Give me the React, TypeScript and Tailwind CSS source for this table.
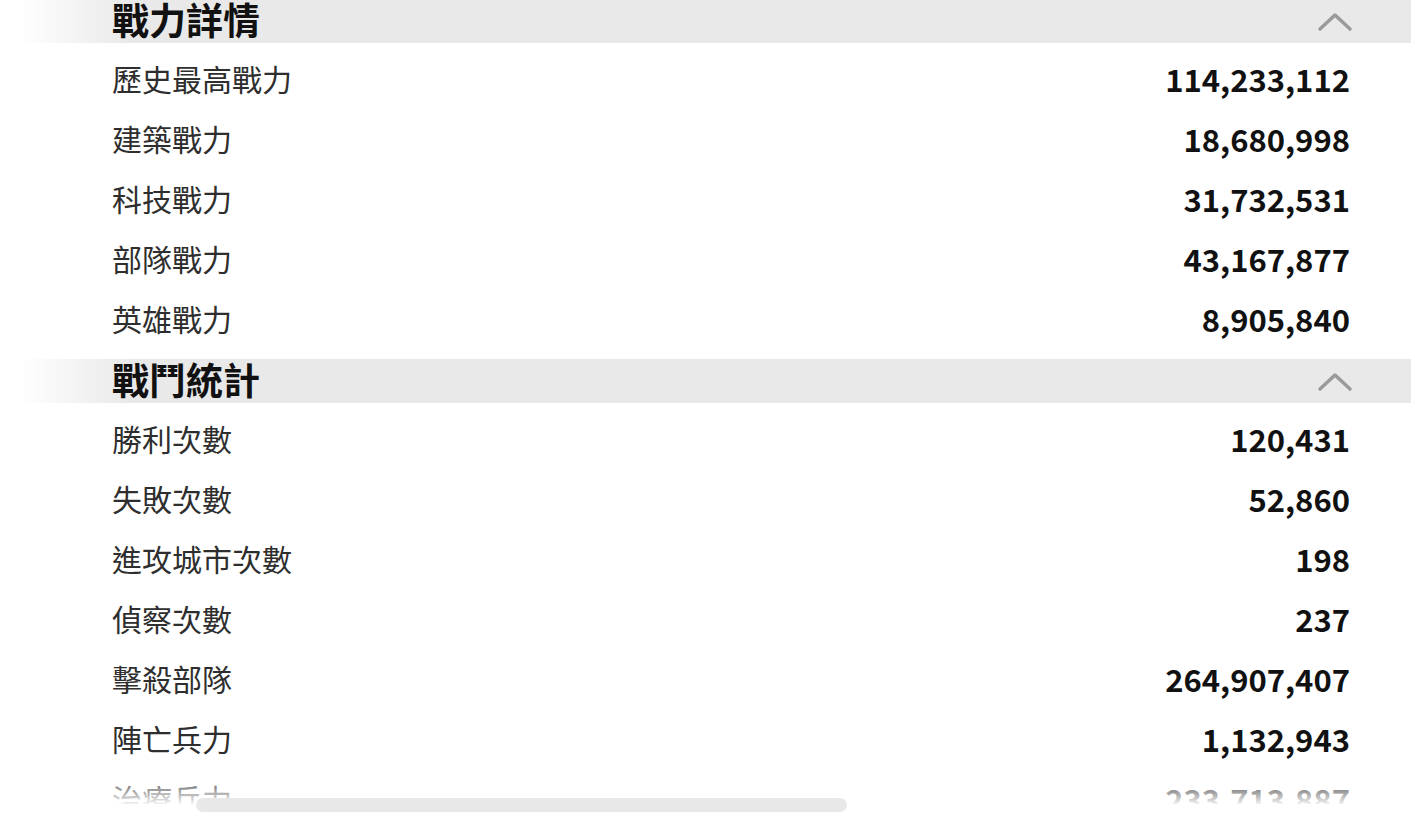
import React from "react";

type Row = { label: string; value: string };

const sections: { title: string; rows: Row[] }[] = [
  {
    title: "戰力詳情",
    rows: [
      { label: "歷史最高戰力", value: "114,233,112" },
      { label: "建築戰力", value: "18,680,998" },
      { label: "科技戰力", value: "31,732,531" },
      { label: "部隊戰力", value: "43,167,877" },
      { label: "英雄戰力", value: "8,905,840" },
    ],
  },
  {
    title: "戰鬥統計",
    rows: [
      { label: "勝利次數", value: "120,431" },
      { label: "失敗次數", value: "52,860" },
      { label: "進攻城市次數", value: "198" },
      { label: "偵察次數", value: "237" },
      { label: "擊殺部隊", value: "264,907,407" },
      { label: "陣亡兵力", value: "1,132,943" },
      { label: "治療兵力", value: "233,713,887" },
    ],
  },
];

const font = "font-['Noto_Sans_CJK_TC','Noto_Sans',sans-serif]";

const Chevron = () => (
  <svg width="36" height="22" viewBox="0 0 36 22" fill="none">
    <path
      d="M3 19 L18 5 L33 19"
      stroke="#9a9a9a"
      strokeWidth="3.5"
      strokeLinecap="round"
      strokeLinejoin="round"
    />
  </svg>
);

const SectionHeader = ({ title }: { title: string }) => (
  <div className="py-2">
    <div className="ml-[20px] mr-[4px] h-[44px] flex items-center justify-between pl-[92px] pr-[58px] bg-[linear-gradient(to_right,rgba(233,233,233,0)_0px,#e9e9e9_110px,#e9e9e9_100%)]">
      <h2 className="pb-1 text-[37px] leading-tight font-bold text-[#111]">{title}</h2>
      <Chevron />
    </div>
  </div>
);

const StatRow = ({ label, value }: Row) => (
  <div className="h-[60px] pb-1 flex items-center justify-between pl-[112px] pr-[65px]">
    <span className="text-[30px] leading-tight text-[#2e2e2e]">{label}</span>
    <span className="text-[31px] leading-tight font-bold text-[#111]">{value}</span>
  </div>
);

export default function App() {
  return (
    <div className={`relative h-[837px] w-full overflow-hidden bg-white ${font}`}>
      <div className="h-[804px] overflow-hidden">
        <div className="-mt-[9px]">
          {sections.map((s) => (
            <div key={s.title}>
              <SectionHeader title={s.title} />
              {s.rows.map((r) => (
                <StatRow key={r.label} {...r} />
              ))}
            </div>
          ))}
        </div>
      </div>
      <div className="absolute left-0 right-0 top-[772px] h-[34px] bg-linear-to-b from-white/0 to-white" />
      <div className="absolute left-[196px] top-[798px] h-[14px] w-[651px] rounded-full bg-[#e8e8e8]" />
    </div>
  );
}
